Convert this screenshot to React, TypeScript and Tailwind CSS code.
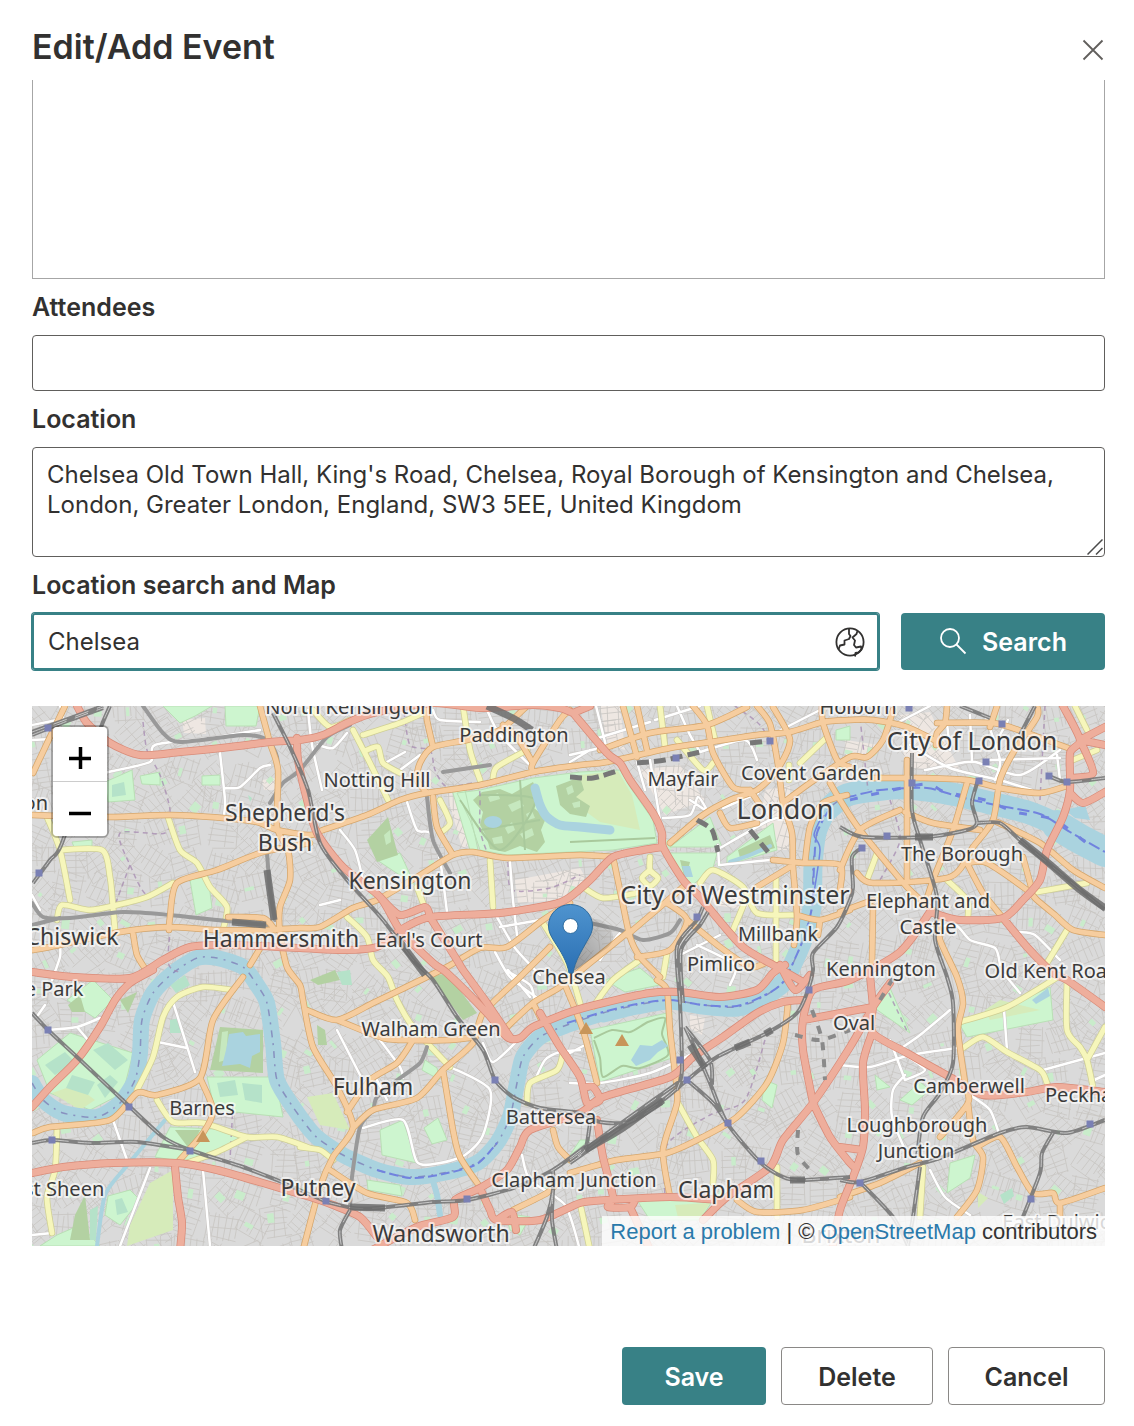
import React from "react";

type Point = [number, number];

const parse = (line: string): Point[] =>
  line
    .trim()
    .split(/\s+/)
    .map((pair) => pair.split(",").map(Number) as Point);

/* Rounded curve through every point of a line. */
const curve = (line: string): string => {
  const p = parse(line);
  let d = `M${p[0][0]} ${p[0][1]}`;
  for (let i = 0; i < p.length - 1; i++) {
    const a = p[Math.max(i - 1, 0)];
    const b = p[i];
    const c = p[i + 1];
    const e = p[Math.min(i + 2, p.length - 1)];
    const f = (n: number) => n.toFixed(1);
    d += `C${f(b[0] + (c[0] - a[0]) / 8)} ${f(b[1] + (c[1] - a[1]) / 8)} ${f(c[0] - (e[0] - b[0]) / 8)} ${f(
      c[1] - (e[1] - b[1]) / 8,
    )} ${c[0]} ${c[1]}`;
  }
  return d;
};

const curves = (lines: string[]) => lines.map(curve).join("");
const areas = (lines: string[]) => lines.map((l) => `M${l.trim().replace(/\s+/g, "L")}Z`).join("");

const trunkRoads = curves([
  "77,706 87,723 110,743 140,755 180,752 230,747 270,742 300,740 323,735 347,723 373,713 433,703 480,708 533,705 560,708 573,713",
  "573,713 607,753 620,763 630,780 653,813 662,833 663,847 683,880 700,897 713,913 743,947 777,967 803,982",
  "573,713 590,706",
  "663,847 643,850 613,857 590,880 570,897 555,904 500,913 430,917 400,930",
  "380,897 400,915 425,907 430,917",
  "297,738 298,760 307,800 317,833 343,867 380,897 400,930 433,963 447,973 487,1013 507,1037 520,1038 533,1027 570,1012 603,1003 650,993 680,992 720,997 757,990 773,973 785,965",
  "32,972 73,977 130,978 163,960 190,947 230,945 300,948 343,950 377,947 400,930",
  "153,970 130,983 115,1000 100,1027 77,1060 50,1087 32,1107",
  "32,1173 63,1167 113,1163 177,1163 217,1170 263,1183 310,1197 333,1205 360,1217 377,1237",
  "175,1167 178,1197 182,1223 180,1250",
  "372,1250 417,1227 453,1217 455,1200 480,1188 507,1170 520,1147 530,1130 580,1113 603,1097 670,1077 693,1057 723,1037 757,1013 783,1002 803,1000",
  "480,1188 490,1210 497,1220 540,1220 580,1203 607,1200 670,1197 720,1200",
  "497,1220 512,1212 516,1230",
  "703,1220 727,1197 770,1167 783,1140 813,1103 850,1047 873,1007 890,983",
  "870,975 873,1007",
  "803,1020 873,1007",
  "873,1007 873,1033 907,1053 950,1077 983,1095 1027,1092 1057,1087 1105,1092",
  "813,1103 803,1050 803,1020 813,990 850,980 900,952 930,912",
  "813,1103 830,1137 850,1163 856,1168",
  "872,1033 863,1063 865,1110 863,1147 853,1177 840,1210 832,1250",
  "840,1147 862,1150",
  "430,917 457,960 463,970 487,1003 510,1037",
  "540,1013 560,1047 580,1077 587,1103 600,1100 593,1087 583,1088",
  "597,1120 603,1157 613,1197 608,1207 630,1207 635,1200",
  "630,1207 650,1250",
  "933,913 960,920 1003,918 1023,900 1040,880 1047,850 1063,817 1070,790 1070,753 1080,740 1063,706",
  "1003,918 1027,947 1053,973 1067,980 1105,1007",
  "1080,740 1105,727",
  "1080,740 1105,745",
  "1080,740 1093,773 1070,778",
  "1070,793 1083,803 1105,792",
  "780,965 795,990 810,975",
  "845,700 850,706",
]);

const primaryRoads = curves([
  "65,706 50,737 33,773",
  "33,815 107,817 170,815 223,818 257,822 277,830 310,835 323,830 367,815 400,800 427,793 480,785 533,772 580,765 607,762 670,748 710,742 757,735 790,732 823,722 850,720 873,720 907,727 940,743",
  "260,706 270,743 278,770 277,827 288,850 290,880 280,907 280,933 287,967 300,985 303,1000 313,1047 337,1087 353,1127 333,1157 320,1187 303,1250",
  "310,843 263,852 217,870 177,883 170,917 169,930",
  "32,950 50,947 120,932 170,927 217,930 263,930 300,928 320,927 353,908 377,900 417,877 453,855 473,852 507,858 580,855 613,857",
  "228,917 263,918 275,930",
  "133,933 137,955 146,970",
  "262,945 250,965",
  "427,793 417,780 420,763 433,747 467,740 500,730 527,706",
  "427,706 427,720 433,747",
  "433,797 437,827 453,855",
  "533,772 533,763 560,720 570,710",
  "533,763 517,737 503,725",
  "570,903 543,920 507,947 480,948 447,967 400,990 373,1003 337,1020 307,1010",
  "337,1020 383,1038 413,1040 450,1040 475,1037",
  "413,1040 397,1063 370,1080 347,1112",
  "353,1128 373,1110 417,1098 443,1070 473,1043 483,1013 520,977 550,947",
  "443,1070 453,1130 460,1157 480,1187",
  "507,1027 533,1003 560,987 590,963 627,933",
  "533,1003 543,1023",
  "553,1130 558,1147 570,1160",
  "513,1210 547,1193 557,1183",
  "330,1170 367,1193 407,1203 415,1220",
  "33,1133 50,1127 110,1120 137,1093 157,1095 200,1078 213,1020 243,977",
  "200,1078 213,1110 203,1133 177,1163",
  "623,706 637,757",
  "637,706 647,750",
  "600,750 650,733 707,725 747,707",
  "693,706 707,725 713,753 733,787 750,790",
  "670,843 703,815 730,800 757,790 777,770 790,740 773,707",
  "757,706 770,724 778,765 783,803 792,833 793,867 797,917 794,945",
  "822,706 823,723 837,760 850,767",
  "783,803 810,783 850,757 867,757 883,740 893,710",
  "847,795 823,803 810,827 805,863",
  "773,860 803,863 840,865 840,890",
  "757,887 790,867",
  "720,813 730,828 757,823",
  "750,790 760,805",
  "830,783 840,800 860,830 907,887 935,912",
  "840,870 860,830 900,810",
  "905,812 933,823 980,830",
  "907,760 907,880",
  "967,783 953,830 933,880 925,905",
  "1037,706 1037,717 1013,753 1000,780 993,820 973,847 950,877 873,883 857,873",
  "870,778 920,778 967,780 1000,788 1040,793 1070,785",
  "947,706 945,723 937,733 936,745",
  "937,723 993,723 1027,733 1068,748",
  "997,706 990,727",
  "997,822 1040,843 1073,870 1105,888",
  "967,863 987,863 1027,890 1037,900 1055,915 1073,930 1105,935",
  "967,863 983,893 1003,918",
  "1023,857 1032,890",
  "873,907 872,963",
  "840,912 873,900",
  "937,913 940,940 957,977 963,1003 958,1030 965,1083 968,1103 940,1137",
  "968,1103 973,1140 983,1157 977,1190 957,1217",
  "977,1147 1000,1137 1017,1167 1033,1193 1053,1193 1060,1203 1105,1188",
  "1060,1203 1060,1220",
  "840,1197 880,1183 920,1163",
  "657,980 667,990 670,1030 675,1073 677,1103 663,1150 670,1197",
  "570,1173 617,1160 667,1153 703,1137 737,1117 767,1083 783,1043 788,1003",
  "565,985 583,1030 597,1083",
  "737,1200 757,1212 803,1210 850,1197",
  "613,857 622,900 630,937 640,957 660,977",
  "627,935 660,907 683,887",
  "667,903 687,920 670,950 637,957",
  "687,920 720,947 750,967 765,963",
  "797,915 820,920 850,910",
  "820,920 818,935",
]);

const secondaryRoads = curves([
  "47,817 60,850 70,900",
  "60,850 102,850 110,877 113,907 115,930",
  "57,920 62,905 90,910 117,905 147,897 173,883",
  "168,817 180,850 197,863 210,887 227,907 223,930",
  "353,730 370,763 388,800",
  "363,735 400,723 423,713",
  "367,750 378,747 383,763 400,773",
  "313,710 330,727 350,720",
  "463,706 470,750 480,780",
  "493,778 497,767 527,750",
  "440,800 450,823 440,833",
  "490,860 493,907",
  "417,887 423,903",
  "347,917 367,937 373,960 388,977 397,1000 413,1027 450,1067",
  "543,923 567,963 580,1003",
  "300,1147 320,1150 333,1160",
  "563,1053 557,1070 530,1083 527,1103",
  "137,1090 153,1057 163,1017 177,997 203,987 233,990",
  "157,1100 173,1122 203,1123 247,1137 277,1137 310,1148",
  "187,1163 217,1152 247,1137",
  "57,1130 55,1170 47,1197 52,1233",
  "660,706 665,747",
  "707,706 715,740",
  "677,740 703,770 713,763",
  "800,763 827,737",
  "789,780 789,765",
  "583,887 603,898 637,893",
  "650,857 650,870 658,878 650,886 642,878 650,870",
  "700,883 713,870 743,887 757,913 797,915",
  "747,897 733,930",
  "667,953 663,977",
  "640,960 613,980 593,1007",
  "678,1103 697,1137 713,1160 713,1183",
  "777,1167 777,1217",
  "580,1203 590,1250",
  "1075,706 1087,730",
  "1073,760 1097,750",
  "947,880 967,900 968,917",
  "1037,892 1087,883",
  "1067,930 1047,963",
  "1060,975 1053,980 1007,1007 960,1022",
  "963,1048 983,1037 1007,1052 1040,1070 1047,1083",
  "1067,980 1067,1030 1080,1047 1087,1060 1093,1087",
  "1087,1060 1105,1027",
  "923,1167 920,1217",
  "877,853 867,880",
  "776,878 776,960",
]);

const whiteRoads = curves([
  "103,773 150,762 155,745 210,738 260,730",
  "220,753 225,800 224,815",
  "224,788 240,787 260,768 270,765",
  "308,710 312,745 322,790",
  "347,733 333,748 318,745",
  "340,830 355,850 363,880",
  "407,802 417,830 430,833 440,860 447,912",
  "433,710 440,720 480,722",
  "487,710 500,735 535,770",
  "385,763 405,752",
  "400,770 420,755",
  "510,862 513,900 517,935",
  "497,917 515,948 540,975",
  "500,927 540,920",
  "495,952 510,977 540,1000",
  "508,970 530,997",
  "596,706 607,750",
  "570,755 600,748",
  "598,738 650,722",
  "570,762 590,750",
  "637,762 645,790",
  "650,760 660,820",
  "655,720 700,706",
  "677,706 690,735 700,752",
  "700,752 745,740 757,760",
  "663,818 690,815 698,797 708,812",
  "663,735 668,750",
  "690,800 708,812",
  "720,848 770,820 790,818",
  "720,865 770,860",
  "718,845 719,865",
  "600,960 620,933 630,935",
  "680,955 720,935",
  "697,945 735,965 730,985",
  "723,808 758,793",
  "775,733 820,710",
  "893,725 930,706",
  "910,745 950,768 1000,780",
  "925,770 950,765 975,762 1020,775 1060,750",
  "990,760 1060,758",
  "985,715 1000,760 995,780",
  "1000,780 1032,790",
  "1008,720 1000,735",
  "1057,755 1060,780",
  "945,706 950,750",
  "970,715 972,762",
  "925,930 955,925 970,940 995,948 1000,965",
  "1020,932 1035,935 1060,960",
  "1005,975 1020,993",
  "903,1047 920,1035 950,1010",
  "1004,1010 1007,1050",
  "840,1065 870,1067 910,1055 957,1048",
  "890,1040 905,1080",
  "905,1075 893,1090 892,1117 905,1150",
  "905,1055 925,1070 905,1080",
  "930,1170 945,1197 970,1215",
  "970,1095 990,1110 1000,1137",
  "1043,1070 1105,1053",
  "1090,1082 1105,1075",
  "48,1030 77,1027 100,1018",
  "77,1027 88,1040",
  "173,1002 185,1040 195,1072",
  "158,1042 187,1048",
  "113,1120 127,1160",
  "150,1168 120,1246",
  "203,1170 210,1246",
  "32,1235 52,1233",
  "45,1005 38,1015",
  "60,945 60,957 52,980",
  "337,1030 360,1075",
  "380,1040 400,1067 403,1078",
  "377,1080 387,1100",
  "450,1067 490,1090 483,1135 465,1155 440,1163 417,1162 403,1120 363,1128",
  "505,970 530,985 535,1003",
  "483,1043 493,1062 518,1040",
  "580,1050 560,1052 545,1060 535,1080",
  "570,1083 600,1083 650,1073 690,1055",
  "522,1155 530,1180 565,1205 580,1250",
  "570,1053 583,1046",
  "60,706 62,718 32,725",
  "32,740 52,739",
  "32,895 40,910",
  "340,900 320,905",
]);

const rails = curves([
  "32,735 70,720 103,708",
  "32,732 103,706",
  "110,706 98,735 62,843 50,860 33,883",
  "273,713 290,747 308,790 320,843 347,880 383,920 413,960 433,980 457,1017 483,1050 495,1080 513,1097 540,1108 580,1113 600,1122 630,1122 662,1103",
  "708,912 700,925 681,950 683,1003",
  "703,907 697,920 677,947 680,1003 682,1070 677,1090",
  "570,1163 613,1133 663,1100 687,1080 717,1057 767,1033 797,1013 808,990 813,970 813,953 837,927 850,900 853,887 852,857 863,847",
  "570,1160 610,1131 655,1099 682,1080",
  "840,827 863,837 927,837 967,830 977,823 972,803 978,780",
  "977,823 1000,823 1020,840 1060,873 1105,910",
  "912,753 912,810 920,840 937,897 935,940 947,977 953,1003 953,1063 940,1093 923,1117 917,1157",
  "920,1167 913,1217 907,1250",
  "840,1180 860,1182 907,1167 940,1158 1000,1133 1027,1127 1067,1133 1105,1120",
  "860,1182 893,1217 910,1250",
  "1053,1133 1042,1153 1040,1173 1023,1217",
  "685,1027 698,1055 710,1083 727,1123 760,1162 783,1177 800,1180 850,1177",
  "687,1080 713,1103 727,1123",
  "685,1027 710,1060 712,1085",
  "32,1013 48,1030 77,1057 130,1107 163,1137 190,1150 243,1167 277,1180",
  "32,1143 52,1140 90,1143 137,1142 190,1150",
  "327,1202 353,1208 377,1208 433,1202 467,1200 513,1188 553,1170 590,1143",
  "277,1180 327,1202",
  "350,1210 340,1230 342,1250",
  "553,1170 553,1190 547,1217 533,1250",
  "553,1190 552,1220 557,1250",
  "590,1123 585,1150 570,1160",
  "1035,706 1020,735",
  "1105,778 1067,782 1049,776",
  "960,706 990,718",
]);

const undergroundLines = curves([
  "143,706 163,733 180,742 243,735 267,740 277,757 278,785",
  "32,903 43,917 70,918 123,912 170,915 217,920 267,925",
  "32,925 60,918",
  "267,853 270,890 275,920",
  "350,725 327,737 300,770 283,783 270,803",
  "427,797 433,840 450,873",
  "443,772 490,765",
  "590,923 620,930 643,940 670,933 680,920",
  "427,1047 420,1063 400,1078 377,1097 373,1110 360,1127 352,1177 350,1207",
]);

const yards = curves([
  "487,706 513,718 532,730",
  "663,1100 645,1112 620,1130 585,1150",
  "1020,840 1045,860 1080,890 1105,908",
  "267,870 274,920",
  "395,935 410,955 425,975",
  "690,1045 705,1068",
  "735,1048 750,1042",
  "765,1034 772,1030",
  "915,837 933,837",
  "790,1180 805,1180",
  "232,922 266,925",
  "350,1207 385,1208",
]);

const tunnels = curves([
  "570,777 593,778 617,771",
  "637,763 665,760 700,752",
  "697,820 712,830 718,852",
  "750,830 768,852",
  "750,743 768,741",
]);

const boundaries = curves([
  "143,722 147,750 160,775 170,810 165,833 120,833 130,865 147,895 175,883",
  "130,865 115,905",
  "175,883 168,960 178,972",
  "404,712 410,745 430,750 435,770 447,787 478,785 480,830 490,860",
  "508,862 512,890 550,888 580,875",
  "735,706 760,725 775,750 785,765",
  "860,718 868,790",
  "890,800 900,840 880,880",
  "765,1040 745,1100 710,1115 667,1145 665,1200",
  "885,985 897,1010 908,1033",
  "233,1105 230,1160",
  "1045,706 1040,800",
]);

const riverMain =
  "32,1083 43,1100 63,1113 97,1117 120,1103 135,1080 140,1053 142,1020 153,993 173,973 197,958 217,958 243,967 257,985 267,1003 273,1043 277,1080 293,1107 310,1130 320,1140 343,1155 377,1170 410,1177 443,1173 477,1163 497,1143 510,1117 517,1083 523,1057 540,1037 567,1025 603,1013 637,1005 670,1000 703,1005 737,1007 763,997 783,983 790,970 803,940 812,907 813,867 817,833 827,810 847,795";
const riverEast = "827,810 847,795 893,788 927,790 957,795 990,803 1027,812 1057,825 1080,839 1105,852";

const parks = areas([
  "457,793 480,790 533,778 580,772 620,770 630,787 653,820 657,843 613,850 570,852 507,855 480,850 470,820",
  "710,817 722,847 670,847",
  "667,853 717,853 713,868 690,887",
  "727,857 773,823 777,850 727,865",
  "377,860 400,853 415,885 395,872",
  "590,1030 667,1013 672,1058 600,1082",
  "207,1077 275,1077 283,1117 215,1110",
  "170,1127 237,1130 240,1140 190,1163 155,1157",
  "37,1060 70,1033 133,1053 123,1093 90,1110 50,1093",
  "67,1000 93,980 113,1000 95,1018",
  "380,1130 403,1120 417,1163 382,1155",
  "424,1128 438,1118 447,1140 432,1144",
  "637,1200 713,1200 700,1220 650,1220",
  "1007,1007 1050,987 1053,1020 967,1037 960,1025",
  "873,1007 890,988 910,1033",
  "950,1163 975,1155 970,1178 947,1193",
  "163,706 212,706 195,716 180,723",
  "190,880 208,876 212,908 196,915",
  "140,776 160,772 160,785 142,784",
  "202,776 220,775 220,785 202,785",
  "105,782 132,770 135,800 108,802",
  "72,842 92,840 92,848 74,847",
  "367,1180 400,1185 402,1196 368,1190",
  "505,1213 530,1217 520,1235 510,1230",
  "765,1080 777,1085 772,1108 762,1100",
  "875,1075 890,1087 877,1090",
  "425,1060 437,1068 440,1080 422,1070",
  "225,706 260,706 256,726 226,726",
  "836,730 850,726 850,740 836,740",
  "580,1140 570,1155 590,1140",
  "900,1100 920,1082 930,1090 912,1105",
  "108,1196 130,1190 140,1200 120,1225 105,1215",
  "57,1235 80,1225 100,1246 40,1246",
  "452,790 465,790 478,850 470,850",
  "605,980 640,968 660,985 625,992",
]);

const meadows = areas([
  "580,775 618,771 632,795 640,830 600,822 570,800",
  "150,1183 173,1170 173,1230 127,1246 130,1225",
  "307,1097 333,1093 350,1130 320,1125",
  "675,1205 710,1203 700,1218 678,1218",
  "52,1093 75,1085 95,1100 80,1110",
  "985,1010 1000,1000 1040,1010 990,1020",
  "978,1192 988,1198 978,1208",
]);

const woods = areas([
  "473,800 482,792 500,789 512,794 533,782 540,798 534,808 546,818 541,830 545,842 537,852 520,846 505,852 490,849 486,836 480,825 483,812",
  "556,786 580,777 584,790 576,797 590,806 586,817 570,814 560,805",
  "367,840 388,817 398,855 377,862",
  "430,977 447,973 477,1013 463,1020",
  "220,1027 263,1030 263,1073 210,1070",
  "310,980 335,970 340,980 318,985",
  "680,860 690,862 685,880",
  "738,850 770,835 775,848 740,858",
  "317,1025 325,1030 327,1045 318,1045",
  "175,1130 200,1130 190,1150",
  "68,1005 80,995 85,1012 72,1012",
  "75,1215 85,1195 90,1240 70,1240",
  "120,1000 137,992 128,1013",
]);

const clearings = areas([
  "488,797 498,793 500,799 490,802",
  "508,805 520,800 524,806 512,812",
  "505,828 512,822 515,830 508,834",
  "520,834 532,828 534,835 524,840",
  "492,838 502,836 503,843 494,844",
  "526,814 532,811 535,818 528,820",
  "566,788 572,785 574,792 568,795",
  "572,803 580,801 580,807 574,808",
  "384,835 390,830 391,842 386,845",
  "222,1032 228,1031 226,1060 219,1062",
]);

const allotments = areas([
  "45,1065 65,1052 75,1062 55,1075",
  "72,1075 95,1082 88,1095 66,1088",
  "93,1050 108,1043 128,1060 115,1070",
  "97,1085 110,1075 118,1082 105,1098",
  "217,1083 235,1080 238,1095 220,1097",
  "242,1083 262,1085 262,1103 245,1100",
  "248,795 252,798 250,802",
  "112,785 124,782 126,795 112,797",
  "170,985 185,975 190,985 176,993",
  "170,1020 180,1018 181,1033 170,1033",
  "337,972 350,970 352,985 342,985",
  "115,1200 122,1198 128,1212 117,1215",
  "90,1210 98,1206 96,1240 90,1240",
  "1000,1195 1012,1188 1014,1196 1004,1204",
]);

const builtUp = areas([
  "515,880 580,868 590,885 560,900 518,903",
  "447,795 458,790 470,845 462,848",
  "640,770 680,765 705,800 665,815",
  "765,790 790,785 790,850 775,850 760,825",
  "900,715 930,712 960,770 905,768",
  "845,740 880,745 870,760 845,757",
  "690,1015 705,1018 702,1035 690,1028",
  "262,780 275,778 275,790 264,790",
  "600,706 620,706 625,750 608,745",
  "705,890 760,890 745,910 715,905",
  "182,720 205,718 206,734 184,733",
]);

const lakes = areas([
  "229,1034 243,1032 246,1036 260,1034 260,1052 252,1056 250,1068 240,1064 222,1066 226,1050",
  "631,1060 640,1045 652,1046 662,1040 668,1046 658,1052 650,1060 636,1066",
  "682,866 690,866 693,877 685,877",
  "1032,1000 1048,988 1050,996 1036,1004",
  "1065,810 1085,805 1090,820 1075,818",
]);

const stations: Point[] = [
  [48, 728], [39, 873], [48, 1030], [129, 1107], [52, 1140], [190, 1151], [326, 1201], [467, 1199], [495, 1080],
  [676, 758], [770, 741], [697, 917], [680, 1060], [687, 1080], [809, 990], [728, 1123], [761, 1161], [909, 708],
  [1002, 724], [986, 762], [979, 781], [912, 783], [1049, 776], [1067, 782], [887, 836], [862, 848], [860, 1183],
  [1090, 1124], [1031, 1199],
];

const places: { name: string; x: number; y: number; size: number }[] = [
  { name: "North Kensington", x: 349, y: 714, size: 20 },
  { name: "Paddington", x: 514, y: 742, size: 20 },
  { name: "Holborn", x: 858, y: 714, size: 20 },
  { name: "City of London", x: 972, y: 750, size: 25 },
  { name: "Notting Hill", x: 377, y: 787, size: 20 },
  { name: "Mayfair", x: 683, y: 786, size: 20 },
  { name: "Covent Garden", x: 811, y: 780, size: 20 },
  { name: "London", x: 785, y: 819, size: 27 },
  { name: "Shepherd's", x: 285, y: 821, size: 23 },
  { name: "Bush", x: 285, y: 851, size: 23 },
  { name: "Kensington", x: 410, y: 889, size: 23 },
  { name: "City of Westminster", x: 735, y: 904, size: 25 },
  { name: "The Borough", x: 962, y: 861, size: 20 },
  { name: "Elephant and", x: 928, y: 908, size: 20 },
  { name: "Castle", x: 928, y: 934, size: 20 },
  { name: "Acton", x: 21, y: 810, size: 20 },
  { name: "Chiswick", x: 72, y: 945, size: 23 },
  { name: "Hammersmith", x: 281, y: 947, size: 23 },
  { name: "Earl's Court", x: 429, y: 947, size: 20 },
  { name: "Millbank", x: 778, y: 941, size: 20 },
  { name: "Pimlico", x: 721, y: 971, size: 20 },
  { name: "Kennington", x: 881, y: 976, size: 20 },
  { name: "Old Kent Road", x: 1052, y: 978, size: 20 },
  { name: "Chelsea", x: 569, y: 984, size: 20 },
  { name: "Grove Park", x: 32, y: 996, size: 20 },
  { name: "Oval", x: 854, y: 1030, size: 20 },
  { name: "Walham Green", x: 431, y: 1036, size: 20 },
  { name: "Fulham", x: 373, y: 1095, size: 23 },
  { name: "Camberwell", x: 969, y: 1093, size: 20 },
  { name: "Peckham", x: 1088, y: 1102, size: 20 },
  { name: "Barnes", x: 202, y: 1115, size: 20 },
  { name: "Battersea", x: 551, y: 1124, size: 20 },
  { name: "Loughborough", x: 917, y: 1132, size: 20 },
  { name: "Junction", x: 916, y: 1158, size: 20 },
  { name: "Clapham Junction", x: 574, y: 1187, size: 20 },
  { name: "Clapham", x: 726, y: 1198, size: 23 },
  { name: "Putney", x: 318, y: 1196, size: 23 },
  { name: "East Sheen", x: 53, y: 1196, size: 20 },
  { name: "Wandsworth", x: 441, y: 1242, size: 23 },
  { name: "Brixton", x: 841, y: 1243, size: 23 },
  { name: "East Dulwich", x: 1062, y: 1229, size: 20 },
];

/* Residential streets: one small tilted grid for each block of the city. */
const buildStreets = () => {
  let seed = 7;
  const rand = () => {
    seed = (seed * 16807) % 2147483647;
    return seed / 2147483647;
  };
  let streets = "";
  let greens = "";
  const f = (n: number) => n.toFixed(1);
  for (let x = 32; x < 1130; x += 30) {
    for (let y = 706; y < 1270; y += 30) {
      const cx = x + rand() * 14;
      const cy = y + rand() * 14;
      const a = rand() * Math.PI;
      const c = Math.cos(a);
      const s = Math.sin(a);
      const seg = (u0: number, v0: number, u1: number, v1: number) => {
        streets += `M${f(cx + u0 * c - v0 * s)} ${f(cy + u0 * s + v0 * c)}L${f(cx + u1 * c - v1 * s)} ${f(
          cy + u1 * s + v1 * c,
        )}`;
      };
      for (let k = -15; k <= 15; k += 6) {
        seg(-10 - rand() * 6, k + rand() * 3, 8 + rand() * 8, k + rand() * 3);
      }
      for (let k = -14; k <= 14; k += 12) {
        seg(k + rand() * 5, -15, k + rand() * 5, 15);
      }
      if (rand() > 0.5) {
        const w = 3 + rand() * 6;
        const h = 3 + rand() * 7;
        greens += `M${f(cx)} ${f(cy)}l${f(w * c)} ${f(w * s)}l${f(-h * s)} ${f(h * c)}l${f(-w * c)} ${f(-w * s)}Z`;
      }
    }
  }
  return { streets, greens };
};

const { streets, greens } = buildStreets();

function CityMap() {
  return (
    <svg
      viewBox="32 706 1073 540"
      preserveAspectRatio="xMidYMid slice"
      className="block h-[540px] w-full"
      role="img"
      aria-label="Map of London centred on Chelsea"
    >
      <defs>
        <linearGradient id="pin" x1="0" y1="0" x2="0" y2="1">
          <stop offset="0" stopColor="#4f94cf" />
          <stop offset="1" stopColor="#2a6fb3" />
        </linearGradient>
        <linearGradient id="pinShadow" x1="0" y1="1" x2="1" y2="0">
          <stop offset="0" stopColor="#000" stopOpacity="0.55" />
          <stop offset="1" stopColor="#000" stopOpacity="0.05" />
        </linearGradient>
      </defs>
      <rect x="32" y="706" width="1073" height="540" fill="#dadada" />
      <path d={builtUp} fill="#eee7e2" />
      <path d={streets} fill="none" stroke="#c8c5c2" strokeWidth="0.8" />
      <path d={greens} fill="#c9eccb" />
      <path d={parks} fill="#cdf5cf" stroke="#b9dfb5" strokeWidth="1" strokeLinejoin="round" />
      <path d={meadows} fill="#d6ebba" />
      <path d={woods} fill="#b3d1a2" />
      <path d={clearings} fill="#c6e8bf" />
      <path d={allotments} fill="#b5e2c9" />
      <path
        d={curves([
          "460,800 500,850 535,800 480,795",
          "594,1038 612,1030 630,1032 648,1022 665,1018 662,1034 668,1055 640,1068 622,1066 603,1077 600,1058 594,1040",
          "520,780 525,850",
          "570,842 655,838",
          "480,830 540,820",
        ])}
        fill="none"
        stroke="#a9c99c"
        strokeWidth="2"
      />
      <g fill="none" stroke="#aad3df" strokeLinecap="round" strokeLinejoin="round">
        <path d={curve(riverMain)} strokeWidth="16" />
        <path
          d={curve("603,1013 637,1005 670,1000 703,1005 737,1007 763,997 783,983 790,970 803,940 812,907 813,867 817,833 827,810")}
          strokeWidth="19"
        />
        <path d={curve(riverEast)} strokeWidth="23" />
        <path d={curve("1057,825 1080,839 1105,852")} strokeWidth="30" />
        <path d={curve("535,788 540,805 547,817 560,825 580,827 610,830")} strokeWidth="9" />
        <path d={curve("730,862 750,855 770,846")} strokeWidth="4" />
        <path d={curve("432,1178 437,1195 440,1215")} strokeWidth="6" />
        <path d={curve("165,1120 140,1150 125,1168 105,1195 97,1246")} strokeWidth="4" />
      </g>
      <ellipse cx="493" cy="822" rx="9" ry="6" fill="#aad3df" />
      <path d={lakes} fill="#aad3df" />
      <g fill="none" stroke="#6470de" strokeWidth="2" opacity="0.8">
        <path d={curve(riverMain)} strokeDasharray="7 6 2 6" strokeWidth="1.5" stroke="#7f81b8" />
        <path d={curve("377,1170 410,1178 443,1174 477,1164 497,1143")} strokeDasharray="9 4" />
        <path
          d={curve("567,1023 603,1012 637,1004 670,1000 703,1005 737,1006 763,996 783,982 803,940 812,907 814,867 817,833 830,808")}
          strokeDasharray="10 4 3 4"
        />
        <path d={curve("845,798 880,790 927,788 960,797 1000,806 1040,814 1070,832 1105,852")} strokeDasharray="12 4" />
        <path
          d={curve("850,800 870,795 925,784 945,792 985,800 1015,812 1055,820 1090,846")}
          strokeDasharray="8 14"
          strokeWidth="3"
        />
        <path d={curve("812,905 820,850 814,835 820,820")} strokeWidth="1.5" />
      </g>
      <g fill="none" stroke="#a58ab0" strokeWidth="1.5" strokeDasharray="5 4" opacity="0.75">
        <path d={boundaries} />
      </g>
      <g fill="none" strokeLinejoin="round" strokeLinecap="round">
        <path d={whiteRoads} stroke="#c9c6c4" strokeWidth="3.5" />
        <path d={whiteRoads} stroke="#ffffff" strokeWidth="2.5" />
        <path d={secondaryRoads} stroke="#cfcf95" strokeWidth="6.5" />
        <path d={secondaryRoads} stroke="#f6f6bb" strokeWidth="5" />
        <path d={undergroundLines} stroke="#999999" strokeWidth="4" />
        <path d={primaryRoads} stroke="#d5a66c" strokeWidth="6.5" />
        <path d={primaryRoads} stroke="#f6cd9f" strokeWidth="5" />
        <path d={trunkRoads} stroke="#d98b78" strokeWidth="8" />
        <path d={trunkRoads} stroke="#eeae9c" strokeWidth="6.5" />
      </g>
      <g fill="none">
        <path d={rails} stroke="#777777" strokeWidth="4" opacity="0.9" />
        <path d={rails} stroke="#c8c8c8" strokeWidth="1" strokeDasharray="14 9" />
        <path d={yards} stroke="#6c6c6c" strokeWidth="7" opacity="0.85" />
        <path d={tunnels} stroke="#777777" strokeWidth="5" strokeDasharray="12 5" />
        <path
          d={curves([
            "812,1010 822,1040 825,1080",
            "795,1035 820,1040 850,1030",
            "798,1130 798,1155 815,1175",
            "880,1000 895,975",
          ])}
          stroke="#8a8a8a"
          strokeWidth="4"
          strokeDasharray="8 9"
        />
      </g>
      <g fill="#7a80b4">
        {stations.map(([x, y]) => (
          <rect key={`${x}-${y}`} x={x - 3.5} y={y - 3.5} width="7" height="7" />
        ))}
      </g>
      <g fill="#c8955a">
        <path d="M586 1022l7 12h-14zM622 1034l7 12h-14zM203 1130l7 12h-14z" />
      </g>
      <g
        fontFamily='"Noto Sans", sans-serif'
        textAnchor="middle"
        fill="#3b3b3b"
        stroke="#ffffff"
        strokeOpacity="0.65"
        strokeWidth="4"
        strokeLinejoin="round"
        style={{ paintOrder: "stroke" }}
      >
        {places.map((p) => (
          <text key={p.name} x={p.x} y={p.y} fontSize={p.size}>
            {p.name}
          </text>
        ))}
      </g>
      <path d="M571 973 L588 921 Q602 914 612 932 Q616 943 604 950 Z" fill="url(#pinShadow)" opacity="0.6" />
      <path
        d="M570.500 904.500 C558 904.500 548.500 914 548.500 926 C548.500 932 551 936 554 941 C561 952 567 961 569 973 L573 973 C575 961 581 952 587 941 C590 936 592.500 932 592.500 926 C592.500 914 583 904.500 570.500 904.500 Z"
        fill="url(#pin)"
        stroke="#2e6c9f"
        strokeWidth="1"
      />
      <circle cx="570.500" cy="926" r="7.500" fill="#ffffff" stroke="#2e6c9f" strokeWidth="1" />
    </svg>
  );
}

const labelClass = "flex h-14 items-center text-[25px] leading-8 font-semibold";
const secondaryButton =
  "h-[58px] rounded-[4px] border border-[#8a8886] bg-white pt-0.5 text-[25px] leading-8 font-semibold";

export default function App() {
  return (
    <main className="min-h-screen bg-white pr-[29px] pl-8 font-['Inter',sans-serif] text-[#323130]">
      <header className="flex h-20 items-start justify-between">
        <h1 className="pt-6 text-[34px] leading-[46px] font-semibold">Edit/Add Event</h1>
        <button type="button" aria-label="Close" className="mt-[38px]">
          <svg viewBox="0 0 24 24" className="size-6" fill="none" stroke="#605e5c" strokeWidth="1.800">
            <path d="M2.500 2.500l19 19M21.500 2.500l-19 19" />
          </svg>
        </button>
      </header>

      <form onSubmit={(e) => e.preventDefault()}>
        <textarea
          aria-label="Description"
          className="block h-[199px] w-full resize-none border border-t-0 border-[#a6a6a6] p-4 outline-none"
        />

        <label htmlFor="attendees" className={labelClass}>
          Attendees
        </label>
        <input
          id="attendees"
          type="text"
          className="block h-14 w-full rounded-[4px] border border-[#605e5c] px-3.5 text-2xl outline-none"
        />

        <label htmlFor="location" className={labelClass}>
          Location
        </label>
        <div className="relative">
          <textarea
            id="location"
            defaultValue="Chelsea Old Town Hall, King's Road, Chelsea, Royal Borough of Kensington and Chelsea, London, Greater London, England, SW3 5EE, United Kingdom"
            className="block h-[110px] w-full resize-none rounded-[4px] border border-[#605e5c] px-3.5 py-3 text-2xl leading-[30px] outline-none"
          />
          <svg
            viewBox="0 0 16 16"
            className="pointer-events-none absolute right-0.5 bottom-0.5 size-4"
            fill="none"
            stroke="#4a4a4a"
            strokeWidth="1.500"
            aria-hidden="true"
          >
            <path d="M0.500 15.500l15-15M9 15.500l6.500-6.500" />
          </svg>
        </div>

        <label htmlFor="map-search" className={labelClass}>
          Location search and Map
        </label>
        <div className="flex h-[57px] gap-[22px]">
          <div className="relative flex-1">
            <input
              id="map-search"
              type="text"
              defaultValue="Chelsea"
              className="h-full w-full rounded-[3px] border-2 border-[#388186] pr-14 pl-3.5 text-2xl leading-8 ring-1 ring-[#388186] outline-none"
            />
            <svg
              viewBox="0 0 30 30"
              className="pointer-events-none absolute top-3.5 right-3.5 size-[30px]"
              fill="none"
              stroke="#323130"
              strokeWidth="1.800"
              strokeLinejoin="round"
              aria-hidden="true"
            >
              <circle cx="15" cy="15" r="13.600" />
              <path d="M14 1.500v5.500l1.500 2-1.500 3-4.500 1.500v4l-4.500 1-1.500 4" />
              <path d="M22.500 3.800l-1 3.200-4 3.500 2.500 3-1 4.500 2 2.500 5-1 .5 3-3 3-3 .5-.5 3.500" />
            </svg>
          </div>
          <button
            type="button"
            className="flex w-[204px] items-center justify-center gap-[15px] rounded-[4px] bg-[#388186] text-[25px] leading-8 font-semibold text-white"
          >
            <svg viewBox="0 0 28 28" className="size-7" fill="none" stroke="currentColor" strokeWidth="1.800" aria-hidden="true">
              <circle cx="11" cy="10" r="9" />
              <path d="M17.500 16.500l9 9" />
            </svg>
            Search
          </button>
        </div>

        <section aria-label="Map" className="relative mt-9 overflow-hidden">
          <CityMap />
          <div className="absolute top-[19px] left-[19px] flex w-[58px] flex-col rounded-[6px] border-2 border-black/25 bg-clip-padding">
            <button
              type="button"
              aria-label="Zoom in"
              className="flex h-[55px] items-center justify-center rounded-t-[4px] border-b border-[#cccccc] bg-white pt-2"
            >
              <svg viewBox="0 0 24 24" className="size-6" stroke="#000000" strokeWidth="3.500">
                <path d="M1 12.500h22M12.500 1v22" />
              </svg>
            </button>
            <button
              type="button"
              aria-label="Zoom out"
              className="flex h-[54px] items-center justify-center rounded-b-[4px] bg-white pt-2"
            >
              <svg viewBox="0 0 24 24" className="size-6" stroke="#000000" strokeWidth="3.500">
                <path d="M1 12.500h22" />
              </svg>
            </button>
          </div>
          <p className="absolute right-0 bottom-0 h-[30px] bg-white/80 px-2 font-['Liberation_Sans',sans-serif] text-[22px] leading-8 text-[#333333]">
            <a href="#report" className="text-[#2a7aab]">
              Report a problem
            </a>{" "}
            | ©{" "}
            <a href="#osm" className="text-[#2a7aab]">
              OpenStreetMap
            </a>{" "}
            contributors
          </p>
        </section>

        <footer className="mt-[101px] flex justify-end gap-[15px] pb-[21px]">
          <button
            type="submit"
            className="h-[58px] w-36 rounded-[4px] bg-[#388186] pt-0.5 text-[25px] leading-8 font-semibold text-white"
          >
            Save
          </button>
          <button type="button" className={`${secondaryButton} w-[152px]`}>
            Delete
          </button>
          <button type="button" className={`${secondaryButton} w-[157px]`}>
            Cancel
          </button>
        </footer>
      </form>
    </main>
  );
}
